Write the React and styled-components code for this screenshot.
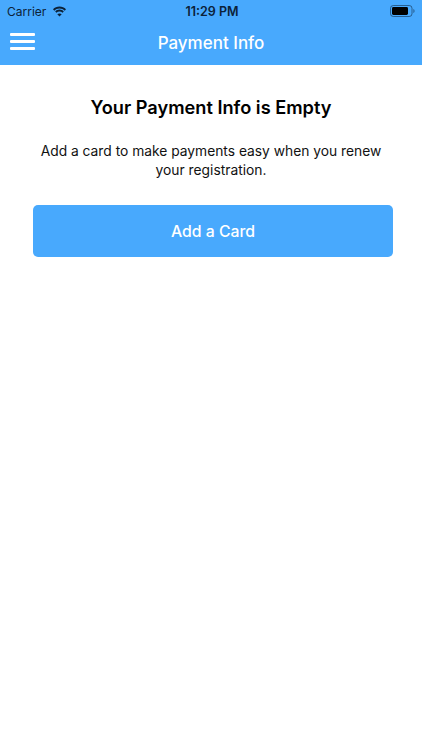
import React from 'react';
import styled, { createGlobalStyle } from 'styled-components';

const GlobalStyle = createGlobalStyle`
  html, body {
    margin: 0;
    padding: 0;
    background: #fff;
    font-family: Inter, "Liberation Sans", sans-serif;
  }
  * {
    box-sizing: border-box;
  }
`;

const Page = styled.main`
  width: 422px;
  height: 750px;
  overflow: hidden;
  background: #fff;
`;

const Header = styled.header`
  background: #48a9fd;
  height: 65px;
`;

const StatusBar = styled.div`
  height: 20px;
  padding: 2px 7px 0;
  display: grid;
  grid-template-columns: 1fr auto 1fr;
  align-items: center;
  font-size: 12px;
  color: #0c2238;
`;

const Carrier = styled.div`
  display: flex;
  align-items: center;
  gap: 6px;
`;

const Time = styled.div`
  font-weight: 600;
  font-size: 12.5px;
  margin-left: 2px;
`;

const BatteryWrap = styled.div`
  display: flex;
  justify-content: flex-end;
`;

const NavBar = styled.div`
  height: 45px;
  padding: 0 10px;
  display: grid;
  grid-template-columns: 1fr auto 1fr;
  align-items: center;
`;

const Burger = styled.button`
  width: 25px;
  padding: 0;
  border: 0;
  background: none;
  display: flex;
  flex-direction: column;
  gap: 4px;
  margin-top: -2px;
`;

const BurgerLine = styled.span`
  display: block;
  height: 3px;
  border-radius: 1px;
  background: #fff;
`;

const NavTitle = styled.h1`
  margin: 1px 0 0;
  font-size: 17px;
  font-weight: 500;
  color: #fff;
`;

const Empty = styled.section`
  padding: 31px 0 0;
  display: flex;
  flex-direction: column;
  align-items: center;
`;

const Title = styled.h2`
  margin: 0;
  font-size: 18.2px;
  line-height: 22px;
  font-weight: 600;
  color: #000;
  text-align: center;
`;

const Message = styled.p`
  margin: 24px 0 0;
  width: 360px;
  font-size: 13.8px;
  line-height: 19px;
  color: #111;
  text-align: center;
`;

const AddButton = styled.button`
  align-self: flex-start;
  margin: 25px 0 0 33px;
  width: 360px;
  height: 52px;
  border: 0;
  border-radius: 5px;
  background: #48a9fd;
  color: #fff;
  font-family: inherit;
  font-size: 15.8px;
  font-weight: 500;
`;

function WifiIcon() {
  return (
    <svg width="15" height="11" viewBox="0 0 15 11" fill="#0c2238">
      <path d="M7.500 2.600c2 0 3.800.8 5.200 2.100l1.300-1.400C12.300 1.600 10 .6 7.500.6S2.700 1.600 1 3.300l1.300 1.400c1.400-1.300 3.200-2.100 5.200-2.100z" />
      <path d="M7.500 5.600c1.200 0 2.200.4 3 1.200l1.300-1.400C10.700 4.300 9.200 3.600 7.500 3.600s-3.200.7-4.300 1.800l1.300 1.400c.8-.8 1.800-1.200 3-1.200z" />
      <path d="M7.500 10.600l2.200-2.400c-.6-.5-1.400-.8-2.200-.8s-1.600.3-2.200.8z" />
    </svg>
  );
}

function BatteryIcon() {
  return (
    <svg width="25" height="12" viewBox="0 0 25 12">
      <rect x="0.5" y="0.5" width="21.5" height="11" rx="2.8" fill="none" stroke="#0c2238" strokeOpacity="0.55" />
      <rect x="2" y="2" width="16" height="8" rx="1.4" fill="#000" />
      <path d="M23.300 4v4c.8-.3 1.300-1.100 1.300-2s-.5-1.700-1.300-2z" fill="#0c2238" fillOpacity="0.5" />
    </svg>
  );
}

export default function App() {
  return (
    <>
      <GlobalStyle />
      <Page>
        <Header>
          <StatusBar>
            <Carrier>
              Carrier
              <WifiIcon />
            </Carrier>
            <Time>11:29 PM</Time>
            <BatteryWrap>
              <BatteryIcon />
            </BatteryWrap>
          </StatusBar>
          <NavBar>
            <Burger aria-label="Menu">
              <BurgerLine />
              <BurgerLine />
              <BurgerLine />
            </Burger>
            <NavTitle>Payment Info</NavTitle>
          </NavBar>
        </Header>
        <Empty>
          <Title>Your Payment Info is Empty</Title>
          <Message>Add a card to make payments easy when you renew your registration.</Message>
          <AddButton>Add a Card</AddButton>
        </Empty>
      </Page>
    </>
  );
}
